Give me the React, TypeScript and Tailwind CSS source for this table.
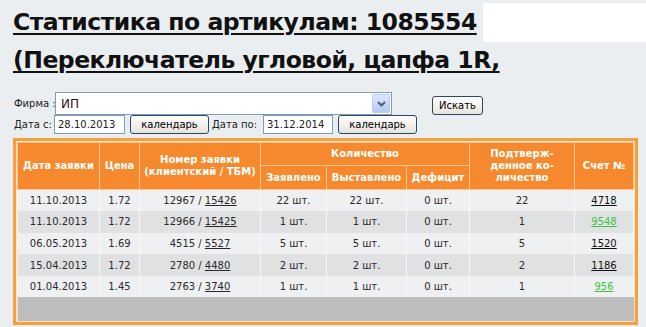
import React from "react";

type Row = {
  date: string;
  price: string;
  client: string;
  tbm: string;
  declared: string;
  issued: string;
  deficit: string;
  confirmed: string;
  invoice: string;
  paid: boolean;
};

const rows: Row[] = [
  { date: "11.10.2013", price: "1.72", client: "12967", tbm: "15426", declared: "22 шт.", issued: "22 шт.", deficit: "0 шт.", confirmed: "22", invoice: "4718", paid: false },
  { date: "11.10.2013", price: "1.72", client: "12966", tbm: "15425", declared: "1 шт.", issued: "1 шт.", deficit: "0 шт.", confirmed: "1", invoice: "9548", paid: true },
  { date: "06.05.2013", price: "1.69", client: "4515", tbm: "5527", declared: "5 шт.", issued: "5 шт.", deficit: "0 шт.", confirmed: "5", invoice: "1520", paid: false },
  { date: "15.04.2013", price: "1.72", client: "2780", tbm: "4480", declared: "2 шт.", issued: "2 шт.", deficit: "0 шт.", confirmed: "2", invoice: "1186", paid: false },
  { date: "01.04.2013", price: "1.45", client: "2763", tbm: "3740", declared: "1 шт.", issued: "1 шт.", deficit: "0 шт.", confirmed: "1", invoice: "956", paid: true },
];

const XpButton = ({ label, w }: { label: string; w: string }) => (
  <button
    className={`${w} h-[19px] rounded-[3px] border border-[#2c4868] bg-gradient-to-b from-white to-[#e6e4dc] text-[10px] leading-none text-black`}
  >
    {label}
  </button>
);

const th = "border border-[#fbc492] text-white font-bold text-[10px] leading-[12px] text-center";
const td = "border-x border-[#f8f8f8] text-center text-[10px] text-[#2a2a2a]";

export default function App() {
  return (
    <div className="w-[646px] min-h-[327px] bg-[#ebeef0] font-['DejaVu_Sans',sans-serif] text-[#222]">
      {/* Title */}
      <div className="pt-[3px]">
        <div className="flex h-[38px]">
          <h1 className="whitespace-nowrap pl-[13px] text-[23.5px] font-bold leading-[38px] tracking-[-0.5px] text-[#111] underline decoration-2 underline-offset-[3px]">
            Статистика по артикулам: 1085554
          </h1>
          <div className="ml-[6px] h-[39px] flex-1 bg-white" />
        </div>
        <div className="h-[38px] whitespace-nowrap pl-[13px] text-[23.5px] font-bold leading-[38px] tracking-[-0.5px] text-[#111] underline decoration-2 underline-offset-[3px]">
          (Переключатель угловой, цапфа 1R,
        </div>
      </div>

      {/* Filters */}
      <div className="mt-[13px] pl-[14px] text-[10px]">
        <div className="flex h-[23px] items-end">
          <span className="mb-[4px] w-[41px] whitespace-nowrap">Фирма :</span>
          <div className="flex h-[23px] w-[337px] items-center justify-between border border-[#7f9db9] bg-white pl-[5px] pr-px">
            <span className="text-[12px] text-[#2a1010]">ИП</span>
            <span className="flex h-[19px] w-[18px] items-center justify-center rounded-[2px] border border-[#bccbee] bg-gradient-to-b from-[#dde6fd] to-[#b7c9f5]">
              <svg width="9" height="6" viewBox="0 0 9 6">
                <path d="M1 1 L4.5 4.5 L8 1" fill="none" stroke="#4d6185" strokeWidth="2" />
              </svg>
            </span>
          </div>
          <div className="ml-[40px]">
            <XpButton label="Искать" w="w-[51px]" />
          </div>
        </div>
        <div className="flex h-[19px] items-center">
          <span className="w-[40px] whitespace-nowrap">Дата с:</span>
          <div className="flex h-[19px] w-[71px] items-center border border-[#7f9db9] bg-white pl-[3px] text-[10px]">28.10.2013</div>
          <div className="ml-[5px]">
            <XpButton label="календарь" w="w-[79px]" />
          </div>
          <span className="ml-[3px] w-[51px] whitespace-nowrap">Дата по:</span>
          <div className="flex h-[19px] w-[70px] items-center border border-[#7f9db9] bg-white pl-[3px] text-[10px]">31.12.2014</div>
          <div className="ml-[5px]">
            <XpButton label="календарь" w="w-[79px]" />
          </div>
        </div>
      </div>

      {/* Table */}
      <div className="ml-[13px] mt-[4px] w-[625px] border-[3px] border-[#f7a03a] bg-[#fbe3c9] p-px">
        <table className="w-full table-fixed border-collapse">
          <colgroup>
            <col className="w-[82px]" />
            <col className="w-[40px]" />
            <col className="w-[121px]" />
            <col className="w-[66px]" />
            <col className="w-[80px]" />
            <col className="w-[63px]" />
            <col className="w-[105px]" />
            <col />
          </colgroup>
          <thead className="bg-[#f6892d]">
            <tr className="h-[23px]">
              <th rowSpan={2} className={th}>Дата заявки</th>
              <th rowSpan={2} className={th}>Цена</th>
              <th rowSpan={2} className={th}>
                Номер заявки
                <br />
                (клиентский / ТБМ)
              </th>
              <th colSpan={3} className={th}>Количество</th>
              <th rowSpan={2} className={th}>
                Подтверж-
                <br />
                денное ко-
                <br />
                личество
              </th>
              <th rowSpan={2} className={th}>Счет №</th>
            </tr>
            <tr className="h-[24px]">
              <th className={th}>Заявлено</th>
              <th className={th}>Выставлено</th>
              <th className={th}>Дефицит</th>
            </tr>
          </thead>
          <tbody>
            {rows.map((r, i) => (
              <tr key={i} className={`h-[21.6px] ${i % 2 === 0 ? "bg-[#eef0f1]" : "bg-[#dfe1e2]"}`}>
                <td className={td}>{r.date}</td>
                <td className={td}>{r.price}</td>
                <td className={td}>
                  {r.client} / <span className="underline">{r.tbm}</span>
                </td>
                <td className={td}>{r.declared}</td>
                <td className={td}>{r.issued}</td>
                <td className={td}>{r.deficit}</td>
                <td className={td}>{r.confirmed}</td>
                <td className={td}>
                  <span className={`underline ${r.paid ? "text-[#3ec43e]" : "text-[#111]"}`}>{r.invoice}</span>
                </td>
              </tr>
            ))}
            <tr className="h-[24px] bg-[#bdbdbd]">
              <td colSpan={8} />
            </tr>
          </tbody>
        </table>
      </div>
    </div>
  );
}
